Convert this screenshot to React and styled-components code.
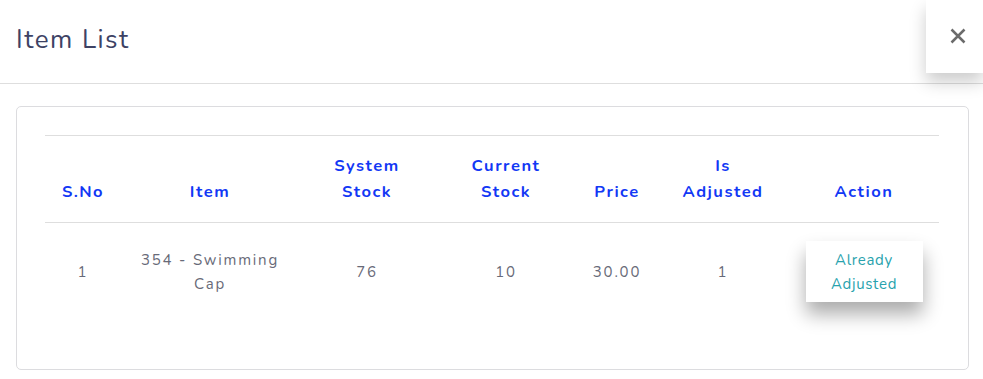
import React from "react";
import styled, { createGlobalStyle } from "styled-components";

const Global = createGlobalStyle`
  html, body { margin: 0; padding: 0; background: #fff; }
  body { font-family: "Nunito", Lato, "Noto Sans", sans-serif; }
  * { box-sizing: border-box; }
`;

const Modal = styled.div`
  width: 983px;
  background: #fff;
`;

const Header = styled.div`
  display: flex;
  justify-content: space-between;
  align-items: flex-start;
  height: 84px;
  border-bottom: 1px solid #dedede;
  padding-left: 16px;
`;

const Title = styled.h4`
  margin: 0;
  align-self: center;
  margin-top: -5px;
  font-size: 26px;
  font-weight: 400;
  color: #3d4264;
  letter-spacing: 1.5px;
`;

const CloseButton = styled.button`
  width: 57px;
  height: 73px;
  border: none;
  background: #fff;
  display: flex;
  align-items: center;
  justify-content: center;
  padding: 0 0 2px 6px;
  box-shadow: 0 9px 16px rgba(0, 0, 0, 0.2);
  cursor: pointer;
`;

const Body = styled.div`
  padding: 22px 14px 10px 16px;
`;

const Card = styled.div`
  border: 1px solid #dcdcdf;
  border-radius: 5px;
  padding: 28px 29px 49px 28px;
`;

const Table = styled.table`
  width: 100%;
  border-collapse: collapse;
  table-layout: fixed;
`;

const Th = styled.th`
  width: ${(p) => p.$w}px;
  padding: 17px 0 17px;
  vertical-align: bottom;
  text-align: center;
  font-size: 16.5px;
  line-height: 26px;
  font-weight: 700;
  letter-spacing: 1.5px;
  color: #1238f5;
  border-top: 1px solid #dedede;
  border-bottom: 1px solid #dedede;
`;

const Td = styled.td`
  padding: 18px 0;
  vertical-align: middle;
  text-align: center;
  font-size: 15px;
  line-height: 24px;
  letter-spacing: 1.8px;
  color: #686a78;
`;

const ActionButton = styled.button`
  width: 117px;
  height: 61px;
  border: none;
  background: #fff;
  font-family: inherit;
  font-size: 15px;
  line-height: 24px;
  letter-spacing: 0.7px;
  color: #27a2ad;
  padding: 5px 6px;
  box-shadow: 0 12px 18px rgba(0, 0, 0, 0.33);
  margin-left: 0;
`;

const columns = [
  { label: "S.No", w: 76 },
  { label: "Item", w: 178 },
  { label: ["System", "Stock"], w: 136 },
  { label: ["Current", "Stock"], w: 142 },
  { label: "Price", w: 80 },
  { label: ["Is", "Adjusted"], w: 132 },
  { label: "Action", w: 150 },
];

const rows = [
  { sno: 1, item: ["354 - Swimming", "Cap"], sys: 76, cur: 10, price: "30.00", adj: 1 },
];

function XIcon() {
  return (
    <svg width="16" height="16" viewBox="0 0 16 16">
      <path d="M1.5 1.5 L14.5 14.5 M14.5 1.5 L1.5 14.5" stroke="#6b6b6b" strokeWidth="2.5" strokeLinecap="butt" />
    </svg>
  );
}

export default function App() {
  return (
    <>
      <Global />
      <Modal>
        <Header>
          <Title>Item List</Title>
          <CloseButton aria-label="Close">
            <XIcon />
          </CloseButton>
        </Header>
        <Body>
          <Card>
            <Table>
              <thead>
                <tr>
                  {columns.map((c, i) => (
                    <Th key={i} $w={c.w}>
                      {Array.isArray(c.label) ? (
                        <>
                          {c.label[0]}
                          <br />
                          {c.label[1]}
                        </>
                      ) : (
                        c.label
                      )}
                    </Th>
                  ))}
                </tr>
              </thead>
              <tbody>
                {rows.map((r) => (
                  <tr key={r.sno}>
                    <Td>{r.sno}</Td>
                    <Td>
                      {r.item[0]}
                      <br />
                      {r.item[1]}
                    </Td>
                    <Td>{r.sys}</Td>
                    <Td>{r.cur}</Td>
                    <Td>{r.price}</Td>
                    <Td>{r.adj}</Td>
                    <Td>
                      <ActionButton>
                        Already
                        <br />
                        Adjusted
                      </ActionButton>
                    </Td>
                  </tr>
                ))}
              </tbody>
            </Table>
          </Card>
        </Body>
      </Modal>
    </>
  );
}
